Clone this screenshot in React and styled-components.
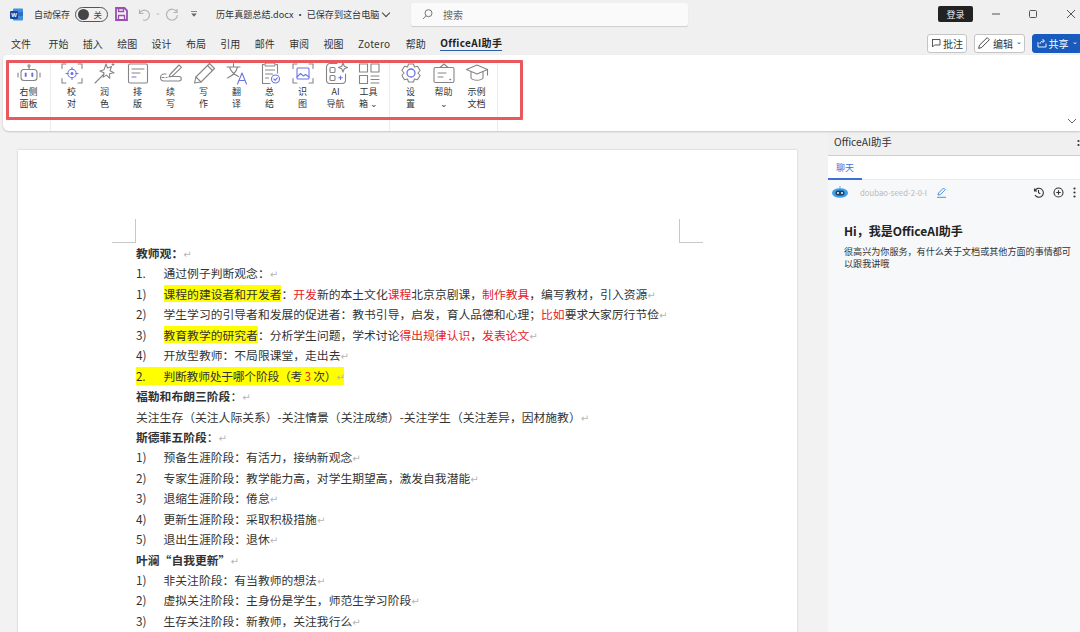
import React from "react";
import styled, { createGlobalStyle } from "styled-components";

const FONT = `"Noto Sans CJK SC", "Liberation Sans", sans-serif`;
const GRAY = "#858585";
const ACCENT = "#6c74e4";

const Svg = ({ children, size = 26 }) => (
	<svg width={size} height={size} viewBox="0 0 26 26" fill="none" stroke={GRAY} strokeWidth="1.1" strokeLinecap="round" strokeLinejoin="round">
		{children}
	</svg>
);

const icons = {
	robot: (
		<Svg>
			<rect x="5" y="9.5" width="16" height="11" rx="3" />
			<path d="M13 9.5V7M2 13v4M24 13v4" />
			<circle cx="13" cy="5.8" r="1.1" />
			<path d="M9.7 13.5v2.6M16.3 13.5v2.6" stroke={ACCENT} strokeWidth="2" />
		</Svg>
	),
	target: (
		<Svg>
			<path d="M7 4H3v4.5M19 4h4v4.5M7 23H3v-4.5M19 23h4v-4.5" />
			<circle cx="13" cy="13.5" r="4.2" stroke={ACCENT} />
			<path d="M13 7.5v2M13 17.5v2M7 13.5h2M17 13.5h2" stroke={ACCENT} />
			<circle cx="13" cy="13.5" r="1" fill={ACCENT} stroke={ACCENT} />
		</Svg>
	),
	wand: (
		<Svg>
			<path d="M3 23l9-9" />
			<path d="M14 4l1.5 4 4-1.5-1.5 4.3 4 2-4.5 1 .3 4.5-3.3-3.2-3.4 2 .8-4.4-4-1.6 4.2-1.4z" />
			<path d="M21 3.5v2M20 4.5h2" />
		</Svg>
	),
	layout: (
		<Svg>
			<rect x="3.5" y="4" width="19" height="19" rx="1.5" />
			<path d="M7 9h12M7 13h8" />
			<path d="M7 17h4" stroke={ACCENT} />
		</Svg>
	),
	continueWrite: (
		<Svg>
			<path d="M8 14H6a3.5 3.5 0 0 0 0 7h15a2.2 2.2 0 0 0 0-4.5H12" />
			<path d="M12 14.5l9-9.5 2.5 2.3-9.5 9-3 .7z" />
			<path d="M4 17.5h5" stroke={ACCENT} strokeDasharray="2 2" />
		</Svg>
	),
	pencil: (
		<Svg>
			<path d="M3.5 23l1.4-6L18.5 3.5l5 5L10 22z" />
			<path d="M16.5 5.5l5 5" />
			<path d="M4.9 17l5.1 5" />
		</Svg>
	),
	translate: (
		<Svg>
			<path d="M3 7h13M9.5 3.5V7M13.5 7c-1.2 5-4.5 8.5-10 11M5.5 7c1.2 4 4.5 7.5 9 9.5" />
			<path d="M13.5 24l4.5-11 4.5 11M15 20.5h6" stroke={ACCENT} />
		</Svg>
	),
	summary: (
		<Svg>
			<path d="M7 4.5H5.5v19H13M19 4.5h1.5V13" />
			<rect x="8" y="3" width="10" height="3" rx="1" />
			<path d="M8.5 10h9M8.5 14h7M8.5 18h3" />
			<circle cx="18.5" cy="19" r="4" stroke={ACCENT} />
			<path d="M16.8 19l1.3 1.3 2.2-2.4" stroke={ACCENT} />
		</Svg>
	),
	image: (
		<Svg>
			<path d="M7 4H3v4.5M19 4h4v4.5M7 23H3v-4.5M19 23h4v-4.5" />
			<rect x="7" y="8" width="12" height="11" rx="1" stroke={ACCENT} />
			<path d="M7 17l3.5-3.5 3 2.5 2-1.5L19 17" stroke={ACCENT} />
		</Svg>
	),
	aiNav: (
		<Svg>
			<path d="M14 3.5H7A3.5 3.5 0 0 0 3.5 7v13A3.5 3.5 0 0 0 7 23.5h12a3.5 3.5 0 0 0 3.5-3.5v-6" />
			<rect x="7" y="7.5" width="5" height="5" rx="1" />
			<rect x="7" y="15.5" width="5" height="5" rx="1" />
			<path d="M20 3l1.3 3.2 3.2 1.3-3.2 1.3L20 12l-1.3-3.2-3.2-1.3 3.2-1.3z" />
			<path d="M17.5 16v3.5M15.7 17.8h3.6" stroke={ACCENT} />
		</Svg>
	),
	tools: (
		<Svg>
			<rect x="3.5" y="4" width="8" height="8" />
			<rect x="15" y="4" width="8" height="8" />
			<rect x="3.5" y="15.5" width="8" height="8" />
			<path d="M15 16h8M15 19.5h8M15 23h8" />
		</Svg>
	),
	gear: (
		<Svg>
			<path d="M10.5 3h5l1 3 3-.8 2.6 4.3-2.1 2.5 2.1 2.5-2.6 4.3-3-.8-1 3h-5l-1-3-3 .8L3.9 14.5 6 12 3.9 9.5l2.6-4.3 3 .8z" transform="translate(0 1)" />
			<circle cx="13" cy="13" r="4" stroke={ACCENT} strokeWidth="1.3" />
		</Svg>
	),
	help: (
		<Svg>
			<rect x="3" y="7.5" width="20" height="15" rx="1.5" />
			<path d="M9 7.5L13 4l4 3.5" />
			<path d="M7 13h8M7 17h5" />
			<path d="M19 19.5h.5" stroke={ACCENT} strokeWidth="1.5" />
		</Svg>
	),
	cap: (
		<Svg>
			<path d="M2.5 9.5L13 5l10.5 4.5L13 14z" />
			<path d="M7 12v6c2 3 10 3 12 0v-6" />
			<path d="M23.5 9.5V15" stroke={ACCENT} />
		</Svg>
	),
};

const ribbonGroups = [
	[{ icon: "robot", lines: ["右侧", "面板"] }],
	[
		{ icon: "target", lines: ["校", "对"] },
		{ icon: "wand", lines: ["润", "色"] },
		{ icon: "layout", lines: ["排", "版"] },
		{ icon: "continueWrite", lines: ["续", "写"] },
		{ icon: "pencil", lines: ["写", "作"] },
		{ icon: "translate", lines: ["翻", "译"] },
		{ icon: "summary", lines: ["总", "结"] },
		{ icon: "image", lines: ["识", "图"] },
		{ icon: "aiNav", lines: ["AI", "导航"] },
		{ icon: "tools", lines: ["工具", "箱 ⌄"] },
	],
	[
		{ icon: "gear", lines: ["设", "置"] },
		{ icon: "help", lines: ["帮助", "⌄"] },
		{ icon: "cap", lines: ["示例", "文档"] },
	],
];

const tabs = ["文件", "开始", "插入", "绘图", "设计", "布局", "引用", "邮件", "审阅", "视图", "Zotero", "帮助"];

const Mk = () => <Return>↵</Return>;

// each row of the document: n = list number, b = bold row
function getDocRows() {
	return [
		{ b: true, c: <>教师观：<Mk /></> },
		{ n: "1.", c: <>通过例子判断观念：<Mk /></> },
		{ n: "1)", c: <><Hl>课程的建设者和开发者</Hl>：<Red>开发</Red>新的本土文化<Red>课程</Red>北京京剧课，<Red>制作教具</Red>，编写教材，引入资源<Mk /></> },
		{ n: "2)", c: <>学生学习的引导者和发展的促进者：教书引导，启发，育人品德和心理；<Red>比如</Red>要求大家厉行节俭<Mk /></> },
		{ n: "3)", c: <><Hl>教育教学的研究者</Hl>：分析学生问题，学术讨论<Red>得出规律认识</Red>，<Red>发表论文</Red><Mk /></> },
		{ n: "4)", c: <>开放型教师：不局限课堂，走出去<Mk /></> },
		{ hl: true, n: "2.", c: <>判断教师处于哪个阶段（考 <Red>3</Red> 次）<Mk /></> },
		{ c: <><Strong>福勒和布朗三阶段</Strong>：<Mk /></> },
		{ c: <>关注生存（关注人际关系）-关注情景（关注成绩）-关注学生（关注差异，因材施教）<Mk /></> },
		{ c: <><Strong>斯德菲五阶段</Strong>：<Mk /></> },
		{ n: "1)", c: <>预备生涯阶段：有活力，接纳新观念<Mk /></> },
		{ n: "2)", c: <>专家生涯阶段：教学能力高，对学生期望高，激发自我潜能<Mk /></> },
		{ n: "3)", c: <>退缩生涯阶段：倦怠<Mk /></> },
		{ n: "4)", c: <>更新生涯阶段：采取积极措施<Mk /></> },
		{ n: "5)", c: <>退出生涯阶段：退休<Mk /></> },
		{ b: true, c: <>叶澜“自我更新”<Mk /></> },
		{ n: "1)", c: <>非关注阶段：有当教师的想法<Mk /></> },
		{ n: "2)", c: <>虚拟关注阶段：主身份是学生，师范生学习阶段<Mk /></> },
		{ n: "3)", c: <>生存关注阶段：新教师，关注我行么<Mk /></> },
	];
}

export default function App() {
	const docRows = getDocRows();
	return (
		<>
			<GlobalStyle />
			<Shell>
				<TitleBar>
					<WordIcon>
						<svg width="13" height="13" viewBox="0 0 13 13">
							<rect x="3" y="0.5" width="10" height="12" rx="1" fill="#3f8fe0" />
							<rect x="3" y="4" width="10" height="4" fill="#2b6fc9" />
							<rect x="0" y="3" width="8" height="8" rx="1" fill="#17479e" />
							<text x="4" y="9.3" fontSize="6" fontWeight="700" fill="#fff" textAnchor="middle" fontFamily="Liberation Sans">W</text>
						</svg>
					</WordIcon>
					<AutoSave>自动保存</AutoSave>
					<Toggle>
						<Knob />
						<ToggleText>关</ToggleText>
					</Toggle>
					<SaveIcon>
						<svg width="13" height="14" viewBox="0 0 13 14" fill="none" stroke="#9a4fb0" strokeWidth="1.8">
							<path d="M1 1h8.5L12 3.5V13H1z" />
							<path d="M3.5 1.5h5v3h-5zM3.5 13V8.5h6V13" strokeWidth="1.3" />
						</svg>
					</SaveIcon>
					<History>
						<svg width="13" height="13" viewBox="0 0 13 13" fill="none" stroke="#b4b4b4" strokeWidth="1.2">
							<path d="M1.5 1.5v4h4M1.8 5.3A5 5 0 1 1 5 12" />
						</svg>
						<Caret>⌄</Caret>
						<svg width="14" height="14" viewBox="0 0 14 14" fill="none" stroke="#b4b4b4" strokeWidth="1.2">
							<path d="M12 2v3.5H8.5M11.8 5A5.5 5.5 0 1 0 12.5 8" />
						</svg>
					</History>
					<QuickCaret>
						<svg width="8" height="8" viewBox="0 0 8 8" fill="#666">
							<path d="M1 1.2h6v.8H1zM1.2 3.5h5.6L4 6.8z" />
						</svg>
					</QuickCaret>
					<FileName>历年真题总结.docx • 已保存到这台电脑</FileName>
					<Chevron />
					<SearchBox>
						<svg width="11" height="11" viewBox="0 0 11 11" fill="none" stroke="#666" strokeWidth="0.9">
							<circle cx="6.5" cy="4.2" r="3.5" />
							<path d="M4 6.8L1 10" />
						</svg>
						<span>搜索</span>
					</SearchBox>
					<LoginBtn>登录</LoginBtn>
					<WindowBtn>
						<svg width="10" height="10" viewBox="0 0 10 10" stroke="#555"><path d="M1 5h8" /></svg>
					</WindowBtn>
					<WindowBtn>
						<svg width="10" height="10" viewBox="0 0 10 10" fill="none" stroke="#555"><rect x="1.5" y="1.5" width="7" height="7" rx="1" /></svg>
					</WindowBtn>
					<WindowBtn>
						<svg width="10" height="10" viewBox="0 0 10 10" stroke="#555"><path d="M1 1l8 8M9 1l-8 8" /></svg>
					</WindowBtn>
				</TitleBar>

				<TabBar>
					<TabList>
						{tabs.map((t, i) => (
							<Tab key={i} $first={i === 0} $latin={t === "Zotero"}>{t}</Tab>
						))}
						<ActiveTab>OfficeAI助手</ActiveTab>
					</TabList>
					<Actions>
						<ActionBtn $w={40}>
							<svg width="10" height="10" viewBox="0 0 10 10" fill="none" stroke="#444" strokeWidth="0.9">
								<path d="M1 1.5h8v5.5H3.5L1.5 9V1.5z" />
							</svg>
							批注
						</ActionBtn>
						<ActionBtn $w={51}>
							<svg width="14" height="14" viewBox="0 0 13 13" fill="none" stroke="#444" strokeWidth="0.9">
								<path d="M1.5 11.5l.8-3L9.5 1.5l2 2-7.2 7.2z" />
							</svg>
							编辑
							<SmallCaret>⌄</SmallCaret>
						</ActionBtn>
						<ShareBtn $w={50}>
							<svg width="10" height="10" viewBox="0 0 10 10" fill="none" stroke="#fff" strokeWidth="0.9">
								<path d="M1 4v5h8V5.5M3 6c0-2 1.5-3 4-3M5.5 1L7.5 3 5.5 5" />
							</svg>
							共享
							<SmallCaret>⌄</SmallCaret>
						</ShareBtn>
					</Actions>
				</TabBar>

				<Ribbon>
					{ribbonGroups.map((group, i) => (
						<RibbonGroup key={i} $first={i === 0}>
							{group.map((item) => (
								<RibbonItem key={item.icon}>
									<IconSlot>{icons[item.icon]}</IconSlot>
									{item.lines.map((line) => (
										<RibbonLabel key={line}>{line}</RibbonLabel>
									))}
								</RibbonItem>
							))}
						</RibbonGroup>
					))}
					<RedFrame />
					<Collapse>
						<svg width="10" height="6" viewBox="0 0 10 6" fill="none" stroke="#555" strokeWidth="0.9">
							<path d="M1 1l4 4 4-4" />
						</svg>
					</Collapse>
				</Ribbon>

				<Workspace>
					<DocArea>
						<Page>
							<CropMark $side="left" />
							<CropMark $side="right" />
							{docRows.map((row, i) => (
								<DocRow key={i} $bold={row.b}>
									{row.hl ? (
										<HlRow>
											<RowNum>{row.n}</RowNum>
											<span>{row.c}</span>
										</HlRow>
									) : (
										<>
											{row.n && <RowNum>{row.n}</RowNum>}
											<span>{row.c}</span>
										</>
									)}
								</DocRow>
							))}
						</Page>
					</DocArea>

					<Panel>
						<PanelHead>
							OfficeAI助手
							<PanelDot>:</PanelDot>
						</PanelHead>
						<PanelTabs>
							<PanelTab>聊天</PanelTab>
						</PanelTabs>
						<PanelBody>
							<ModelRow>
								<svg width="16" height="13" viewBox="0 0 16 13">
									<rect x="7.6" y="0" width="0.8" height="3" fill="#3aa0e8" />
									<ellipse cx="8" cy="7" rx="8" ry="4.8" fill="#3aa0e8" />
									<rect x="3.5" y="4.5" width="9" height="5" rx="2.5" fill="#1d3f66" />
									<circle cx="6" cy="7" r="1" fill="#fff" />
									<circle cx="10" cy="7" r="1" fill="#fff" />
								</svg>
								<ModelName>doubao-seed-2-0-l</ModelName>
								<svg width="11" height="11" viewBox="0 0 11 11" fill="none" stroke="#4a90e2" strokeWidth="1">
									<path d="M2 8l.5-2L7.5 1l1.7 1.7-5 5zM1 10.3h9" />
								</svg>
								<ModelTools>
									<svg width="11" height="11" viewBox="0 0 11 11" fill="none" stroke="#333" strokeWidth="1.1">
										<path d="M1.5 1.5V4H4M1.8 3.8A4.5 4.5 0 1 1 2 8M5.5 3v2.7l1.8 1" />
									</svg>
									<svg width="11" height="11" viewBox="0 0 11 11" fill="none" stroke="#333" strokeWidth="1.1">
										<circle cx="5.5" cy="5.5" r="4.5" />
										<path d="M5.5 3.3v4.4M3.3 5.5h4.4" />
									</svg>
									<svg width="3" height="11" viewBox="0 0 3 11" fill="#333">
										<circle cx="1.5" cy="1.5" r="1.1" />
										<circle cx="1.5" cy="5.5" r="1.1" />
										<circle cx="1.5" cy="9.5" r="1.1" />
									</svg>
								</ModelTools>
							</ModelRow>
							<Greeting>Hi，我是OfficeAI助手</Greeting>
							<GreetingSub>很高兴为你服务，有什么关于文档或其他方面的事情都可以跟我讲哦</GreetingSub>
						</PanelBody>
					</Panel>
				</Workspace>
			</Shell>
		</>
	);
}

const GlobalStyle = createGlobalStyle`
	html, body {
		margin: 0;
		padding: 0;
		height: 100%;
		overflow: hidden;
		background: #f0f0f0;
		font-family: ${FONT};
		color: #222;
	}
	* {
		box-sizing: border-box;
	}
`;

const Shell = styled.div`
	width: 1080px;
	height: 632px;
	display: flex;
	flex-direction: column;
	overflow: hidden;
	background: #f0f0f0;
`;

const TitleBar = styled.div`
	height: 31px;
	flex: none;
	display: flex;
	align-items: center;
	padding: 0 0 3px 10px;
	font-size: 9px;
	color: #333;

	> * {
		flex: none;
	}
`;

const WordIcon = styled.div`
	display: flex;
	width: 13px;
`;

const AutoSave = styled.span`
	margin-left: 11px;
	width: 36px;
	white-space: nowrap;
`;

const Toggle = styled.div`
	margin-left: 5px;
	width: 33px;
	height: 15px;
	border: 1px solid #555;
	border-radius: 8px;
	display: flex;
	align-items: center;
	justify-content: space-between;
	padding: 0 5px 0 2px;
`;

const Knob = styled.div`
	width: 11px;
	height: 11px;
	border-radius: 50%;
	background: #444;
`;

const ToggleText = styled.span`
	font-size: 8.5px;
	color: #444;
`;

const SaveIcon = styled.div`
	display: flex;
	margin-left: 7px;
`;

const History = styled.div`
	display: flex;
	align-items: center;
	margin-left: 10px;
	width: 41px;
	justify-content: space-between;
`;

const Caret = styled.span`
	font-size: 7px;
	color: #b4b4b4;
	margin-top: -5px;
`;

const QuickCaret = styled.div`
	display: flex;
	margin-left: 11px;
`;

const FileName = styled.span`
	margin-left: 18px;
	width: 164px;
	white-space: nowrap;
	font-size: 9.1px;
`;

const Chevron = styled.div`
	margin: -3px 0 0 3px;
	width: 6px;
	height: 6px;
	border-right: 1px solid #444;
	border-bottom: 1px solid #444;
	transform: rotate(45deg);
`;

const SearchBox = styled.div`
	margin-left: 22px;
	width: 277px;
	height: 23px;
	background: #fafafa;
	border-radius: 2px;
	box-shadow: 0 1px 1px rgba(0, 0, 0, 0.15);
	display: flex;
	align-items: center;
	gap: 10px;
	padding-left: 11px;
	font-size: 10px;
	color: #666;
`;

const LoginBtn = styled.div`
	margin-left: 250px;
	width: 35px;
	height: 16px;
	background: #222;
	color: #eee;
	border-radius: 2px;
	display: flex;
	align-items: center;
	justify-content: center;
	font-size: 9px;
`;

const WindowBtn = styled.div`
	display: flex;
	justify-content: center;
	width: 37.5px;

	${LoginBtn} + & {
		margin-left: 4px;
	}
`;

const TabBar = styled.div`
	height: 24px;
	flex: none;
	display: flex;
	align-items: center;
	justify-content: space-between;
	padding-left: 11px;
`;

const TabList = styled.div`
	display: flex;
	gap: 14.4px;
	font-size: 10px;
	color: #333;
`;

const Tab = styled.span`
	white-space: nowrap;
	margin-right: ${(props) => (props.$first ? 3 : props.$latin ? 1 : 0)}px;
	letter-spacing: ${(props) => (props.$latin ? "0.3px" : "0")};
`;

const ActiveTab = styled.span`
	font-weight: 700;
	white-space: nowrap;
	color: #222;
	letter-spacing: 0.35px;
	border-bottom: 1.5px solid #2b5fa8;
	line-height: 13px;
`;

const Actions = styled.div`
	display: flex;
	gap: 7px;
	margin-right: -2px;
`;

const ActionBtn = styled.div`
	width: ${(props) => props.$w}px;
	height: 19px;
	display: flex;
	align-items: center;
	justify-content: center;
	gap: 2px;
	background: #fff;
	border: 1px solid #c4c4c4;
	border-radius: 3px;
	font-size: 10px;
	color: #333;
	white-space: nowrap;
`;

const ShareBtn = styled(ActionBtn)`
	background: #185abd;
	border-color: #185abd;
	color: #fff;
`;

const SmallCaret = styled.span`
	font-size: 7px;
	margin: -4px 0 0 1px;
`;

const Ribbon = styled.div`
	position: relative;
	height: 76px;
	flex: none;
	margin-left: 3px;
	background: #fff;
	border-radius: 4px 0 0 6px;
	box-shadow: 0 1px 2px rgba(0, 0, 0, 0.18);
	display: flex;
	padding-top: 5px;
	z-index: 1;
`;

const RibbonGroup = styled.div`
	display: flex;
	border-right: 1px solid #ececec;
	padding: 0 ${(props) => (props.$first ? 5 : 4)}px 0 ${(props) => (props.$first ? 9 : 4)}px;
`;

const RibbonItem = styled.div`
	width: 33px;
	display: flex;
	flex-direction: column;
	align-items: center;
`;

const IconSlot = styled.div`
	height: 26px;
	display: flex;
`;

const RibbonLabel = styled.div`
	font-size: 9px;
	line-height: 11.5px;
	color: #333;
	white-space: nowrap;
`;

const RedFrame = styled.div`
	position: absolute;
	left: 3px;
	top: 5px;
	width: 517px;
	height: 60px;
	border: 3px solid #e8585c;
	border-radius: 1px;
	pointer-events: none;
`;

const Collapse = styled.div`
	position: absolute;
	right: 3px;
	bottom: 7px;
	display: flex;
`;

const Workspace = styled.div`
	flex: 1;
	min-height: 0;
	display: flex;
`;

const DocArea = styled.div`
	flex: 1;
	min-width: 0;
	padding: 19px 31px 0 18px;
	background: #f2f2f2;
	overflow: hidden;
`;

const Page = styled.div`
	position: relative;
	height: 600px;
	background: #fff;
	box-shadow: 0 0 2px rgba(0, 0, 0, 0.2);
	padding: 93px 0 0 118px;
	font-size: 11.8px;
	color: #333;
`;

const CropMark = styled.div`
	position: absolute;
	top: 69px;
	width: 24px;
	height: 24px;
	border-bottom: 1px solid #c8c8c8;
	${(props) => (props.$side === "left" ? "left: 94px; border-right: 1px solid #c8c8c8;" : "left: 661px; border-left: 1px solid #c8c8c8;")}
`;

const DocRow = styled.div`
	height: 20.44px;
	line-height: 20.44px;
	white-space: nowrap;
	display: flex;
	font-weight: ${(props) => (props.$bold ? "700" : "400")};
`;

const RowNum = styled.span`
	width: 27.5px;
	flex: none;
`;

const HlRow = styled.span`
	display: flex;
	background: #ffff00;
	height: 18px;
	line-height: 18px;
	margin-top: 1px;
	letter-spacing: -0.25px;
`;

const Hl = styled.span`
	background: #ffff00;
`;

const Red = styled.span`
	color: #e6202a;
`;

const Strong = styled.span`
	font-weight: 700;
`;

const Return = styled.span`
	color: #b5b5b5;
	font-size: 10px;
	font-family: "DejaVu Sans", sans-serif;
	font-weight: 400;
`;

const Panel = styled.aside`
	width: 252px;
	flex: none;
	display: flex;
	flex-direction: column;
	background: #f7f8fa;
`;

const PanelHead = styled.div`
	height: 25px;
	flex: none;
	display: flex;
	align-items: center;
	justify-content: space-between;
	padding: 0 0 3px 6px;
	font-size: 10.3px;
	color: #333;
	background: #f0f0f0;
	border-bottom: 1px solid #cfcfcf;
`;

const PanelDot = styled.span`
	font-weight: 700;
`;

const PanelTabs = styled.div`
	height: 24px;
	flex: none;
	background: #fff;
	border-bottom: 1px solid #ececec;
	display: flex;
`;

const PanelTab = styled.div`
	width: 34px;
	height: 24px;
	text-align: center;
	font-size: 9px;
	line-height: 23px;
	color: #3f6fd8;
	border-bottom: 2px solid #3f6fd8;
`;

const PanelBody = styled.div`
	flex: 1;
	padding: 0 4px;
`;

const ModelRow = styled.div`
	height: 24px;
	display: flex;
	align-items: center;
`;

const ModelName = styled.span`
	margin: 0 8px 0 12px;
	width: 68px;
	white-space: nowrap;
	font-size: 7.8px;
	color: #b8b8b8;
`;

const ModelTools = styled.div`
	margin-left: auto;
	display: flex;
	align-items: center;
	gap: 9px;
`;

const Greeting = styled.div`
	margin: 19px 0 0 12px;
	font-size: 12px;
	line-height: 16px;
	font-weight: 700;
	color: #222;
`;

const GreetingSub = styled.div`
	margin: 6px 0 0 12px;
	width: 230px;
	font-size: 9.08px;
	line-height: 12px;
	color: #333;
`;
